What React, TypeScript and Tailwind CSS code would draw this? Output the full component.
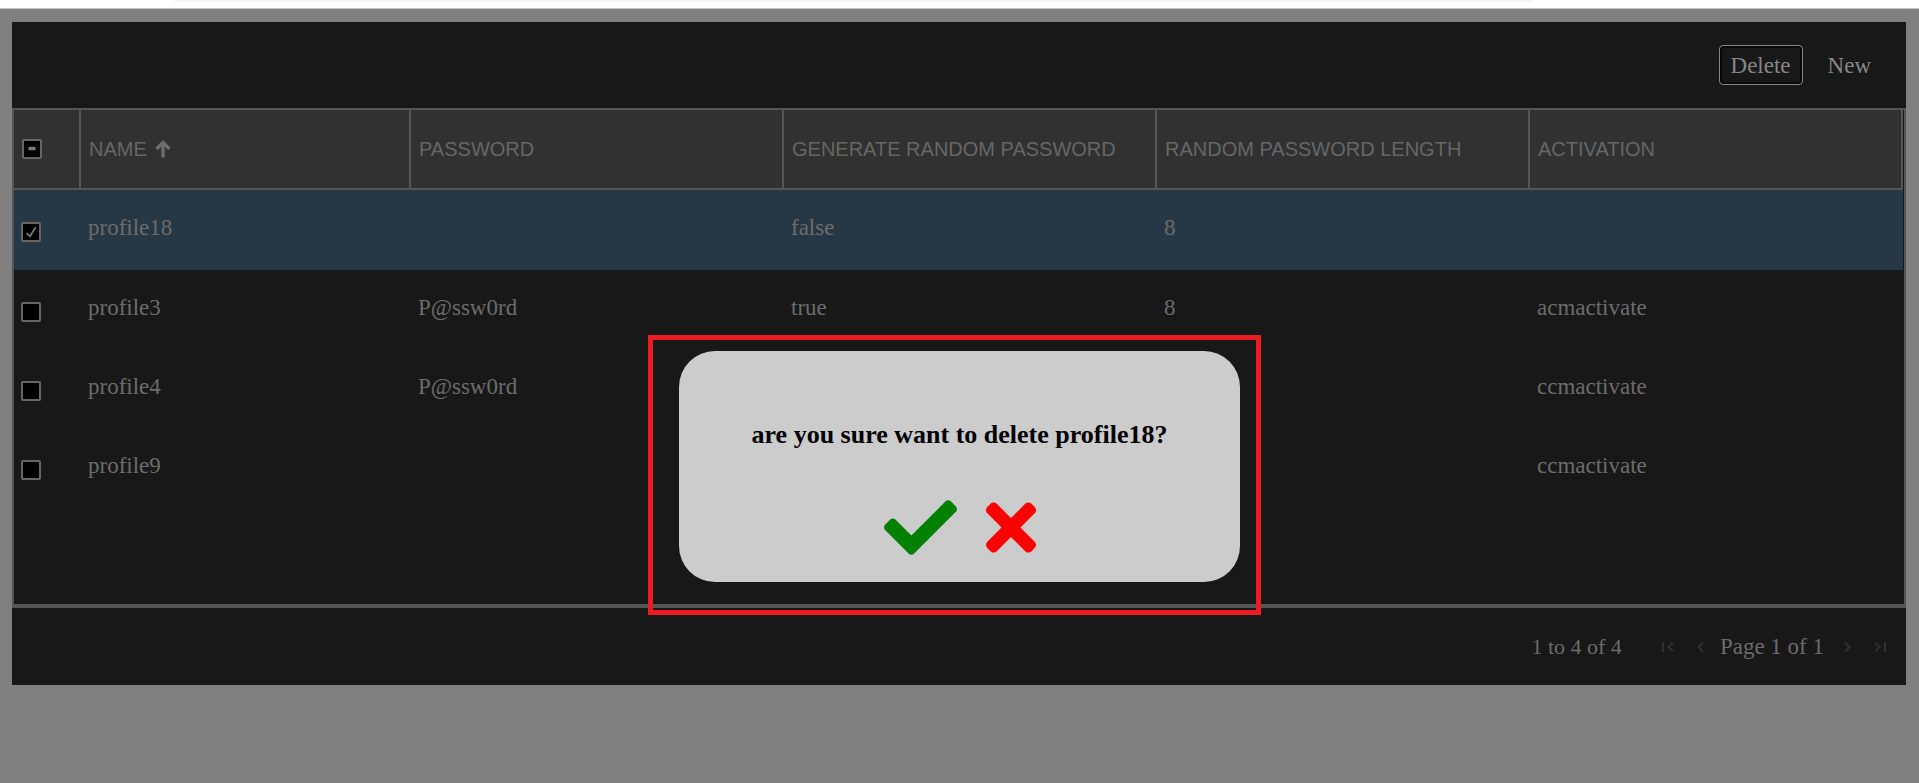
import { useEffect, useRef } from "react";
import { FaCheck, FaTimes } from "react-icons/fa";

type Profile = {
  name: string;
  password: string;
  random: string;
  length: string;
  activation: string;
  selected?: boolean;
};

const profiles: Profile[] = [
  { name: "profile18", password: "", random: "false", length: "8", activation: "", selected: true },
  { name: "profile3", password: "P@ssw0rd", random: "true", length: "8", activation: "acmactivate" },
  { name: "profile4", password: "P@ssw0rd", random: "true", length: "8", activation: "ccmactivate" },
  { name: "profile9", password: "", random: "true", length: "8", activation: "ccmactivate" },
];

const columns = ["NAME", "PASSWORD", "GENERATE RANDOM PASSWORD", "RANDOM PASSWORD LENGTH", "ACTIVATION"];

function GridCheckbox({ label, checked, indeterminate }: { label: string; checked?: boolean; indeterminate?: boolean }) {
  const ref = useRef<HTMLInputElement>(null);
  useEffect(() => {
    if (ref.current) ref.current.indeterminate = Boolean(indeterminate);
  }, [indeterminate]);
  return (
    <span className="grid size-5">
      <input
        ref={ref}
        type="checkbox"
        aria-label={label}
        defaultChecked={checked}
        className="col-start-1 row-start-1 size-5 appearance-none rounded-[2px] border-2 border-[#666666] bg-black"
      />
      <svg viewBox="0 0 20 20" className="pointer-events-none col-start-1 row-start-1 size-5" fill="none" stroke="#7a7a7a">
        {checked && <path d="M5.5 11.2 L9 14.4 L14.5 5.2" strokeWidth="1.7" />}
        {indeterminate && <path d="M6.5 9.5 H13.5" strokeWidth="3.4" />}
      </svg>
    </span>
  );
}

function PageButton({ label, path }: { label: string; path: string }) {
  return (
    <button type="button" aria-label={label} disabled className="flex">
      <svg viewBox="0 0 12 12" className="size-3" fill="none" stroke="#303030" strokeWidth="2">
        <path d={path} />
      </svg>
    </button>
  );
}

export default function App() {
  return (
    <div className="relative min-h-screen bg-[#808080] font-['Liberation_Serif',serif] text-[23px] leading-7 text-[#6c6c6c]">
      <div className="h-[9px] border-b border-[#c8c8c8] bg-white px-[174px]">
        <div className="mr-[38%] h-0.5 rounded-b-lg bg-[#f1f3f4] min-[1200px]:mr-[212px]" />
      </div>

      <main className="mx-3 mt-[13px] mr-[13px] bg-[#181818]">
        <div className="flex h-[86px] items-center justify-end gap-[13px] pr-[23px] text-[#868686]">
          <button type="button" className="h-10 rounded-[4px] border border-[#868686] px-[11px] pt-0.5 shadow-[inset_0_0_0_2px_#080808]">
            Delete
          </button>
          <button type="button" className="h-10 px-3 pt-0.5">
            New
          </button>
        </div>

        <div className="h-[500px] border-2 border-b-4 border-[#555555] pr-px">
          <table className="w-full table-fixed border-collapse text-left">
            <colgroup>
              <col className="w-[67px]" />
              <col className="w-[330px]" />
              <col />
              <col />
              <col />
              <col />
            </colgroup>
            <thead>
              <tr className="h-20 bg-[#313131] font-['Liberation_Sans',sans-serif] text-xl text-[#666666]">
                <th className="border-0 p-0 font-normal">
                  <div className="flex h-20 items-center border-r-2 border-b-2 border-[#555555] pl-2">
                    <GridCheckbox label="Select all rows" indeterminate />
                  </div>
                </th>
                {columns.map((title, i) => (
                  <th key={title} className="p-0 font-normal">
                    <div className="flex h-20 items-center gap-2 border-r-2 border-b-2 border-[#555555] pl-2 whitespace-nowrap">
                      {title}
                      {i === 0 && (
                        <svg viewBox="0 0 16 18" className="h-[18px] w-4" fill="none" stroke="#6c6c6c" strokeWidth="3.4">
                          <path d="M8 17.5 V3 M1.5 9 L8 2.5 L14.5 9" />
                        </svg>
                      )}
                    </div>
                  </th>
                ))}
              </tr>
            </thead>
            <tbody>
              {profiles.map((p) => (
                <tr key={p.name} className={p.selected ? "h-20 bg-[#263845]" : "h-[79px]"}>
                  <td className="p-0 pt-1 pl-[7px]">
                    <GridCheckbox label={`Select ${p.name}`} checked={p.selected} />
                  </td>
                  {[p.name, p.password, p.random, p.length, p.activation].map((value, i) => (
                    <td key={i} className="p-0 pb-1 pl-[7px]">
                      {value}
                    </td>
                  ))}
                </tr>
              ))}
            </tbody>
          </table>
        </div>

        <footer className="flex h-[77px] items-center justify-end pr-5">
          <span className="mr-10 text-[22px]">1 to 4 of 4</span>
          <nav aria-label="Pagination" className="flex items-center gap-[17px]">
            <span className="flex gap-[21px]">
              <PageButton label="First page" path="M1 1 V11 M11 1.5 L6.5 6 L11 10.5" />
              <PageButton label="Previous page" path="M8 1.5 L3.5 6 L8 10.5" />
            </span>
            <span className="-ml-1">Page 1 of 1</span>
            <span className="flex gap-[21px]">
              <PageButton label="Next page" path="M4 1.5 L8.5 6 L4 10.5" />
              <PageButton label="Last page" path="M11 1 V11 M1 1.5 L5.5 6 L1 10.5" />
            </span>
          </nav>
        </footer>
      </main>

      <div className="absolute inset-x-0 top-[335px] flex justify-center pr-[10px]">
        <div className="border-[5px] border-[#ed1c24] pt-[11px] pr-4 pb-7 pl-[26px]">
          <div
            role="dialog"
            aria-labelledby="confirm-title"
            className="flex h-[231px] w-[561px] flex-col items-center rounded-[36px] bg-[#cccccc] pt-[70px]"
          >
            <h2 id="confirm-title" className="text-[26px] leading-7 font-bold text-black">
              are you sure want to delete profile18?
            </h2>
            <div className="mt-[42px] flex gap-[29px]">
              <button type="button" aria-label="Confirm delete" className="text-[73px] text-[#008000]">
                <FaCheck />
              </button>
              <button type="button" aria-label="Cancel" className="text-[73px] text-[#ff0000]">
                <FaTimes className="w-[50px]" />
              </button>
            </div>
          </div>
        </div>
      </div>
    </div>
  );
}
